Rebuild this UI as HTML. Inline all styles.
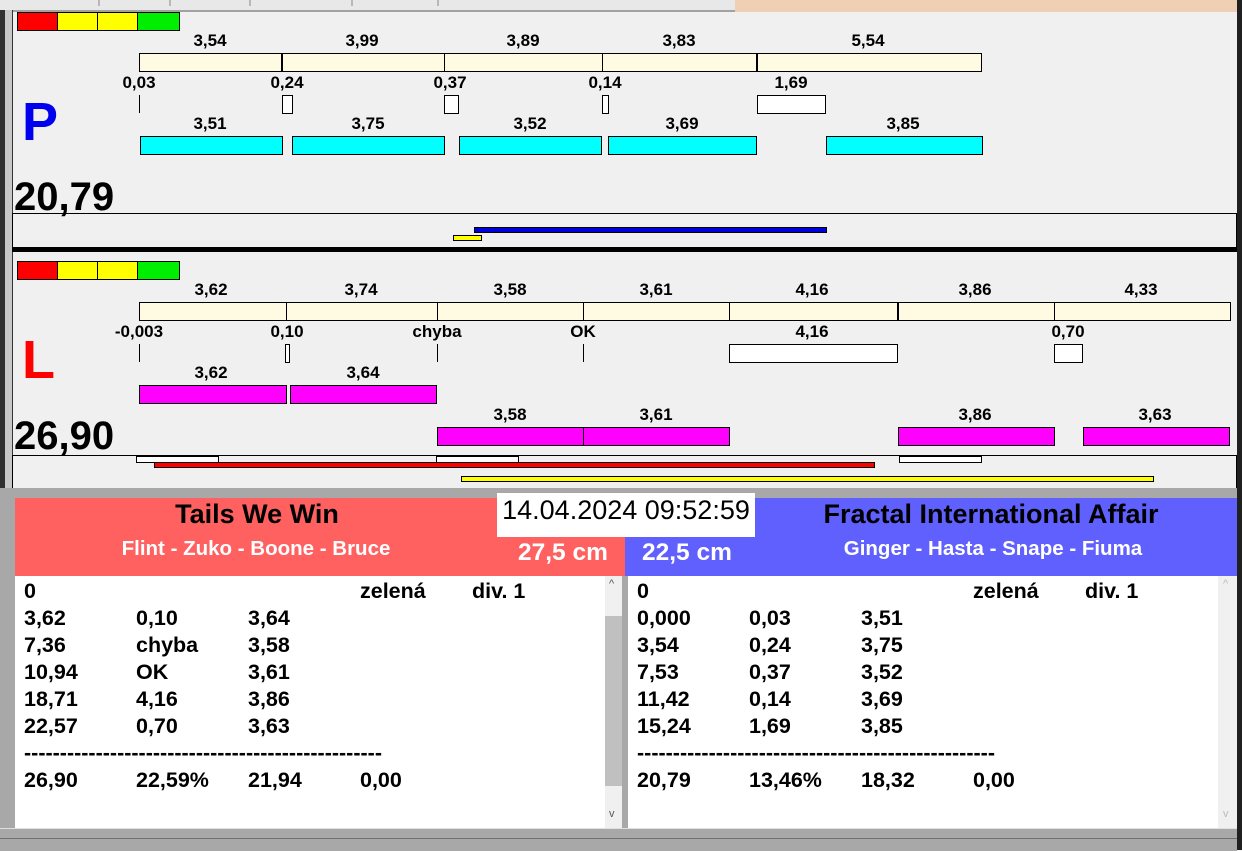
<!DOCTYPE html>
<html><head><meta charset="utf-8"><style>
body{margin:0;width:1242px;height:850px;overflow:hidden;background:#f0f0f0;font-family:"Liberation Sans",Arial,sans-serif;position:relative}
.a{position:absolute}
.l{position:absolute;font-weight:bold;font-size:21.5px;line-height:27px;color:#000}
</style></head><body>
<svg class="a" style="left:0;top:0" width="1242" height="498" font-family="Liberation Sans, Arial, sans-serif" font-weight="bold">
<rect x="0" y="0" width="1242" height="498" fill="#f0f0f0"/>
<rect x="0" y="0" width="5" height="498" fill="#303030"/>
<rect x="5" y="0" width="8" height="498" fill="#c8c8c8"/>
<rect x="1237" y="0" width="5" height="498" fill="#202020"/>
<rect x="0" y="0" width="735" height="10" fill="#e8e8e8"/>
<rect x="735" y="0" width="502" height="12" fill="#f0d0b4"/>
<g stroke="#888" stroke-width="1"><line x1="99" y1="0" x2="99" y2="6"/><line x1="170" y1="0" x2="170" y2="6"/><line x1="250" y1="0" x2="250" y2="6"/><line x1="352" y1="0" x2="352" y2="6"/><line x1="438" y1="0" x2="438" y2="6"/></g>
<line x1="12" y1="11" x2="735" y2="11" stroke="#555"/>
<line x1="12.5" y1="10" x2="12.5" y2="498" stroke="#333"/>
<g stroke="#000" stroke-width="1">
<rect x="17.5" y="12.5" width="40" height="18" fill="#f00"/><rect x="57.5" y="12.5" width="40" height="18" fill="#ff0"/><rect x="97.5" y="12.5" width="40" height="18" fill="#ff0"/><rect x="137.5" y="12.5" width="42" height="18" fill="#0e0"/>
<rect x="139.5" y="53.5" width="842" height="18" fill="#fffbe3"/>
<line x1="282" y1="53" x2="282" y2="72" stroke-width="2"/><line x1="444.5" y1="53" x2="444.5" y2="72"/><line x1="602.5" y1="53" x2="602.5" y2="72"/><line x1="757" y1="53" x2="757" y2="72" stroke-width="2"/>
<line x1="139.5" y1="95" x2="139.5" y2="113"/>
<rect x="282.5" y="95.5" width="10" height="18" fill="#fff"/><rect x="444.5" y="95.5" width="14" height="18" fill="#fff"/><rect x="602.5" y="95.5" width="6" height="18" fill="#fff"/><rect x="757.5" y="95.5" width="68" height="18" fill="#fff"/>
<rect x="140.5" y="136.5" width="142" height="18" fill="#0ff"/><rect x="292.5" y="136.5" width="152" height="18" fill="#0ff"/><rect x="459.5" y="136.5" width="142" height="18" fill="#0ff"/><rect x="608.5" y="136.5" width="148" height="18" fill="#0ff"/><rect x="826.5" y="136.5" width="156" height="18" fill="#0ff"/>
<rect x="12.5" y="213.5" width="1224" height="34" fill="none"/>
<rect x="474.5" y="227.5" width="352" height="5" fill="#00d"/>
<rect x="453.5" y="235.5" width="28" height="5" fill="#ff0"/>
</g>
<rect x="12" y="247" width="1225" height="5" fill="#000"/>
<g font-size="17" text-anchor="middle" fill="#000">
<text x="210" y="46">3,54</text><text x="362" y="46">3,99</text><text x="523" y="46">3,89</text><text x="679" y="46">3,83</text><text x="868" y="46">5,54</text>
<text x="139" y="88">0,03</text><text x="287" y="88">0,24</text><text x="450" y="88">0,37</text><text x="605" y="88">0,14</text><text x="791" y="88">1,69</text>
<text x="210" y="129">3,51</text><text x="368" y="129">3,75</text><text x="530" y="129">3,52</text><text x="682" y="129">3,69</text><text x="903" y="129">3,85</text>
</g>
<text x="22" y="140" font-size="54" fill="#0000ee">P</text>
<text x="14" y="210" font-size="40" fill="#000">20,79</text>
<g stroke="#000" stroke-width="1">
<rect x="17.5" y="261.5" width="40" height="18" fill="#f00"/><rect x="57.5" y="261.5" width="40" height="18" fill="#ff0"/><rect x="97.5" y="261.5" width="40" height="18" fill="#ff0"/><rect x="137.5" y="261.5" width="42" height="18" fill="#0e0"/>
<rect x="139.5" y="302.5" width="1091" height="18" fill="#fffbe3"/>
<line x1="286.5" y1="302" x2="286.5" y2="321"/><line x1="437.5" y1="302" x2="437.5" y2="321"/><line x1="583.5" y1="302" x2="583.5" y2="321"/><line x1="729.5" y1="302" x2="729.5" y2="321"/><line x1="898" y1="302" x2="898" y2="321" stroke-width="2"/><line x1="1054.5" y1="302" x2="1054.5" y2="321"/>
<line x1="139.5" y1="344" x2="139.5" y2="362"/><line x1="437.5" y1="344" x2="437.5" y2="362"/><line x1="583.5" y1="344" x2="583.5" y2="362"/>
<rect x="285.5" y="344.5" width="4" height="18" fill="#fff"/><rect x="729.5" y="344.5" width="168" height="18" fill="#fff"/><rect x="1054.5" y="344.5" width="28" height="18" fill="#fff"/>
<rect x="139.5" y="385.5" width="147" height="18" fill="#f0f"/><rect x="290.5" y="385.5" width="146" height="18" fill="#f0f"/>
<rect x="437.5" y="427.5" width="146" height="18" fill="#f0f"/><rect x="583.5" y="427.5" width="146" height="18" fill="#f0f"/><rect x="898.5" y="427.5" width="156" height="18" fill="#f0f"/><rect x="1083.5" y="427.5" width="146" height="18" fill="#f0f"/>
<rect x="12.5" y="455.5" width="1224" height="34" fill="none"/>
<rect x="136.5" y="456.5" width="82" height="6" fill="#fff"/><rect x="436.5" y="456.5" width="82" height="6" fill="#fff"/><rect x="899.5" y="456.5" width="82" height="6" fill="#fff"/>
<rect x="154.5" y="462.5" width="720" height="5" fill="#f00"/>
<rect x="461.5" y="476.5" width="692" height="5" fill="#ff0"/>
</g>
<g font-size="17" text-anchor="middle" fill="#000">
<text x="211" y="295">3,62</text><text x="361" y="295">3,74</text><text x="510" y="295">3,58</text><text x="656" y="295">3,61</text><text x="812" y="295">4,16</text><text x="975" y="295">3,86</text><text x="1141" y="295">4,33</text>
<text x="139" y="337">-0,003</text><text x="287" y="337">0,10</text><text x="437" y="337">chyba</text><text x="583" y="337">OK</text><text x="812" y="337">4,16</text><text x="1068" y="337">0,70</text>
<text x="211" y="378">3,62</text><text x="363" y="378">3,64</text>
<text x="510" y="420">3,58</text><text x="656" y="420">3,61</text><text x="975" y="420">3,86</text><text x="1155" y="420">3,63</text>
</g>
<text x="22" y="378" font-size="54" fill="#f00">L</text>
<text x="14" y="449" font-size="40" fill="#000">26,90</text>
</svg>
<div class="a" style="left:0;top:488px;width:1242px;height:10px;background:#a8a8a8"></div>
<div class="a" style="left:0;top:498px;width:15px;height:352px;background:#a8a8a8"></div>
<div class="a" style="left:1237px;top:488px;width:5px;height:362px;background:#202020"></div>
<div class="a" style="left:0;top:828px;width:1237px;height:22px;background:#a8a8a8;border-top:1px solid #e0e0e0"></div>
<div class="a" style="left:0;top:838px;width:1237px;height:1px;background:#707070"></div>
<div class="a" style="left:15px;top:498px;width:610px;height:78px;background:#ff6060"></div>
<div class="a" style="left:625px;top:498px;width:612px;height:78px;background:#6060ff"></div>
<div class="a" style="left:0;top:498px;width:514px;text-align:center;font-weight:bold;font-size:27px;line-height:32px">Tails We Win</div>
<div class="a" style="left:0;top:536px;width:512px;text-align:center;font-weight:bold;font-size:20.5px;line-height:26px;color:#fff">Flint - Zuko - Boone - Bruce</div>
<div class="a" style="left:497px;top:493px;width:258px;height:44px;background:#fff;font-size:27px;line-height:34px;text-align:center">14.04.2024 09:52:59</div>
<div class="a" style="left:518px;top:537px;font-weight:bold;font-size:24.5px;line-height:32px;color:#fff">27,5 cm</div>
<div class="a" style="left:642px;top:537px;font-weight:bold;font-size:24.5px;line-height:32px;color:#fff">22,5 cm</div>
<div class="a" style="left:791px;top:498px;width:400px;text-align:center;font-weight:bold;font-size:27px;line-height:32px">Fractal International Affair</div>
<div class="a" style="left:793px;top:536px;width:400px;text-align:center;font-weight:bold;font-size:20.5px;line-height:26px;color:#fff">Ginger - Hasta - Snape - Fiuma</div>
<div class="a" style="left:15px;top:576px;width:590px;height:252px;background:#fff"></div>
<div class="a" style="left:605px;top:576px;width:17px;height:252px;background:#f0f0f0"><div style="position:absolute;left:0;top:40px;width:17px;height:170px;background:#c0c0c0"></div><div style="position:absolute;left:4px;top:2px;font-size:11px;color:#555">^</div><div style="position:absolute;left:4px;top:232px;font-size:11px;color:#555">v</div></div>
<div class="a" style="left:622px;top:576px;width:6px;height:252px;background:#a8a8a8"></div>
<div class="a" style="left:628px;top:576px;width:590px;height:252px;background:#fff"></div>
<div class="a" style="left:1218px;top:576px;width:19px;height:252px;background:#f0f0f0"><div style="position:absolute;left:5px;top:2px;font-size:11px;color:#bbb">^</div><div style="position:absolute;left:5px;top:232px;font-size:11px;color:#bbb">v</div></div>

<div class="l" style="left:24px;top:578px">0<br>3,62<br>7,36<br>10,94<br>18,71<br>22,57<br>&nbsp;<br>26,90</div>
<div class="l" style="left:136px;top:605px">0,10<br>chyba<br>OK<br>4,16<br>0,70<br>&nbsp;<br>22,59%</div>
<div class="l" style="left:248px;top:605px">3,64<br>3,58<br>3,61<br>3,86<br>3,63<br>&nbsp;<br>21,94</div>
<div class="l" style="left:360px;top:578px">zelená<br><br><br><br><br><br><br>0,00</div>
<div class="l" style="left:472px;top:578px">div. 1</div>
<div class="l" style="left:24px;top:740px">--------------------------------------------------</div>

<div class="l" style="left:637px;top:578px">0<br>0,000<br>3,54<br>7,53<br>11,42<br>15,24<br>&nbsp;<br>20,79</div>
<div class="l" style="left:749px;top:605px">0,03<br>0,24<br>0,37<br>0,14<br>1,69<br>&nbsp;<br>13,46%</div>
<div class="l" style="left:861px;top:605px">3,51<br>3,75<br>3,52<br>3,69<br>3,85<br>&nbsp;<br>18,32</div>
<div class="l" style="left:973px;top:578px">zelená<br><br><br><br><br><br><br>0,00</div>
<div class="l" style="left:1085px;top:578px">div. 1</div>
<div class="l" style="left:637px;top:740px">--------------------------------------------------</div>
</body></html>
